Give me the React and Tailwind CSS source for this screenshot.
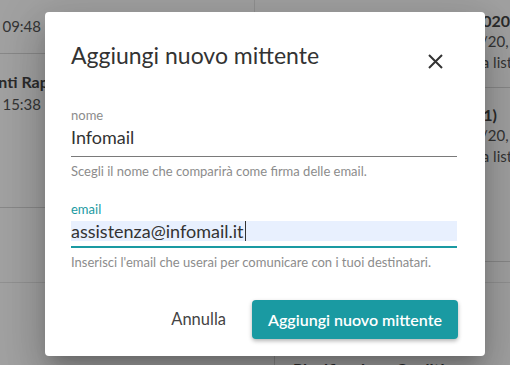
import React from "react";

const RightCard = ({ title, date, list, h, titleEnd }) => (
  <div className={`border-b border-[#d8d8d8] ${h}`}>
    <div className={`flex justify-end ${titleEnd}`}>
      <p className="whitespace-nowrap text-[16px] leading-[21px] font-bold text-[#444]">{title}</p>
    </div>
    <div className="flex justify-end -mr-[41px]">
      <p className="whitespace-nowrap text-[15px] leading-[21px] text-[#555]">{date}</p>
    </div>
    <div className="flex justify-end -mr-[56px]">
      <p className="whitespace-nowrap text-[15px] leading-[21px] text-[#555]">{list}</p>
    </div>
  </div>
);

const App = () => {
  return (
    <div className="relative h-[365px] w-[510px] overflow-hidden bg-white font-['Lato',sans-serif]">
      {/* pagina sotto il dialog */}
      <div className="flex h-[283px] border-b border-[#e6e6e6]">
        <div className="w-[255px] shrink-0 border-r border-[#e6e6e6]">
          <div className="h-[54px] border-b border-[#d8d8d8] flex items-center justify-end pr-[213px]">
            <p className="whitespace-nowrap text-[15px] text-[#555]">Inviata il 10/03/2020, 09:48</p>
          </div>
          <div className="h-[154px] border-b border-[#d8d8d8] pt-[17px]">
            <div className="flex justify-end pr-[188px]">
              <p className="whitespace-nowrap text-[16px] leading-[22px] font-bold text-[#444]">Lista Clienti Rapidi</p>
            </div>
            <div className="flex justify-end pr-[213px]">
              <p className="whitespace-nowrap text-[15px] leading-[22px] text-[#555]">Creata il 02/03/2020, 15:38</p>
            </div>
          </div>
        </div>
        <div className="flex-1 pl-[20px]">
          <RightCard
            h="h-[88px] pt-[10px]"
            titleEnd="mr-0"
            title="Newsletter Marzo 2020"
            date="Creata il 05/03/20, 11:02"
            list="Inviata alla lista Clienti"
          />
          <RightCard
            h="h-[174px] pt-[16px]"
            titleEnd="mr-[13px]"
            title="Promo Primavera (1)"
            date="Creata il 01/03/20, 17:20"
            list="Inviata alla lista Clienti"
          />
        </div>
      </div>
      <div className="flex">
        <div className="w-[275px] h-[82px] border-r border-[#d8d8d8]" />
        <div className="pl-[18px] pt-[74px]">
          <p className="whitespace-nowrap text-[16px] font-bold text-[#444]">Pianificazione Qualità</p>
        </div>
      </div>

      {/* overlay + dialog */}
      <div className="absolute inset-0 flex items-center justify-center bg-black/[0.37] pl-[20px] pt-[3px]">
        <div className="w-[440px] h-[344px] rounded-[4px] bg-white shadow-[0_11px_15px_-7px_rgba(0,0,0,0.2),0_24px_38px_3px_rgba(0,0,0,0.14),0_9px_46px_8px_rgba(0,0,0,0.12)] pl-[26px] pr-[28px] pt-[27px] text-[#333]">
          <div className="flex items-start justify-between h-[32px]">
            <h2 className="text-[23px] leading-[32px] font-normal text-[#333]">Aggiungi nuovo mittente</h2>
            <button type="button" className="mt-[6px] mr-[6px] flex h-[32px] w-[32px] items-center justify-center">
              <svg width="15" height="15" viewBox="0 0 15 15" fill="none" stroke="#333" strokeWidth="2">
                <path d="M1 1L14 14M14 1L1 14" />
              </svg>
            </button>
          </div>

          <div className="mt-[36px]">
            <label className="block text-[13px] leading-[16px] text-[#8c8c8c]">nome</label>
            <div className="mt-[4px] border-b border-[#7a7a7a] pb-[9px]">
              <div className="h-[20px] text-[18px] leading-[20px] text-[#333]">Infomail</div>
            </div>
            <p className="mt-[6px] text-[13px] leading-[16px] text-[#8c8c8c]">
              Scegli il nome che comparirà come firma delle email.
            </p>
          </div>

          <div className="mt-[22px]">
            <label className="block text-[13px] leading-[16px] text-[#1a9aa2]">email</label>
            <div className="mt-[4px] border-b-2 border-[#1a9aa2] pb-[5px]">
              <div className="flex h-[20px] items-center bg-[#e8f0fe] text-[18px] leading-[20px] text-[#333]">
                <span>assistenza@infomail.it</span>
                <span className="ml-[1px] h-[20px] w-[1px] bg-[#333]" />
              </div>
            </div>
            <p className="mt-[6px] text-[13px] leading-[16px] text-[#8c8c8c]">
              Inserisci l'email che userai per comunicare con i tuoi destinatari.
            </p>
          </div>

          <div className="mt-[30px] flex items-center justify-end gap-[26px] mr-[-1px]">
            <button type="button" className="text-[16.5px] text-[#444]">Annulla</button>
            <button
              type="button"
              className="h-[39px] w-[206px] rounded-[4px] bg-[#1a9aa2] text-[16px] font-semibold text-white shadow-[0_2px_4px_rgba(0,0,0,0.3)]"
            >
              Aggiungi nuovo mittente
            </button>
          </div>
        </div>
      </div>
    </div>
  );
};

export default App;
